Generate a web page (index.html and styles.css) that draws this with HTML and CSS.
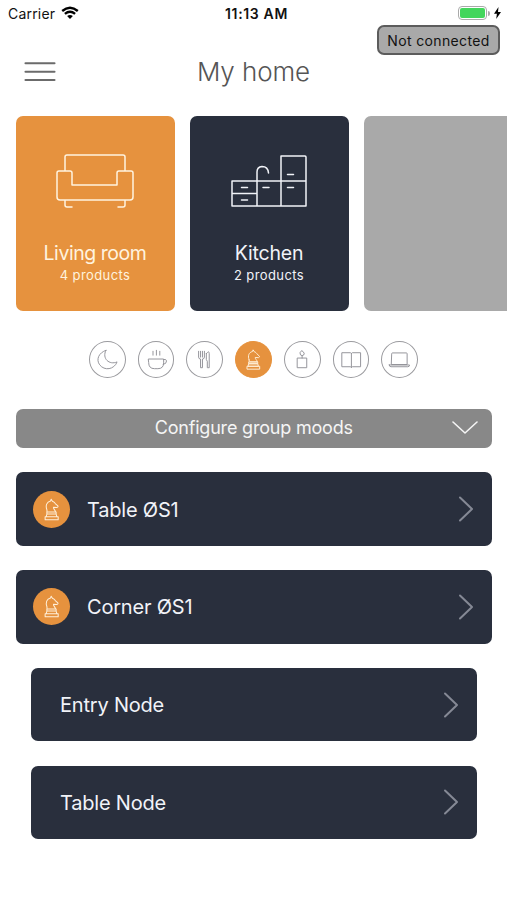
FILE: index.html
```html
<!DOCTYPE html>
<html lang="en">
<head>
<meta charset="utf-8">
<title>My home</title>
<link rel="stylesheet" href="styles.css">
</head>
<body>
<svg class="defs" width="0" height="0">
  <symbol id="knight" viewBox="0 0 36 36">
    <path d="M13.600 18.500C11.800 14 13.500 10.500 17 9.800L17.700 8l1.200 2c1.600.4 2.300 1.400 3 2.500l2.300 2c.4.8-.3 1.500-1.200 1.600l-3.100-.2c-.2 1.600 1.900 2.600 2.100 4.600h-8c-1-.4-.2-1.300-.4-2zM13.500 20.500h9v1.900h-9zM13.500 22.400h9l.7 2.600H12.800zM11.800 25h12.700v3H11.800z"/>
  </symbol>
  <symbol id="chevron" viewBox="0 0 16 28"><path d="M2 2.500l12 11.500L2 25.500"/></symbol>
</svg>
<div class="status">
  <div class="carrier"><span>Carrier</span>
    <svg class="wifi" width="18" height="14" viewBox="0 0 18 14"><path d="M1.200 5Q9-1.400 16.800 5M3.900 7.900Q9 3.700 14.100 7.900"/><path class="dot" d="M6.100 10Q9 7.800 11.900 10L9 13z"/></svg>
  </div>
  <div class="time">11:13 AM</div>
  <div class="power">
    <span class="battery"><span class="charge"></span></span><span class="tip"></span>
    <svg width="7" height="12" viewBox="0 0 7 12"><path d="M4.500 0L0 6.800h2.900L2.200 12 7 4.900H4z"/></svg>
  </div>
  <div class="notice">Not connected</div>
</div>
<header class="header">
  <button class="menu" aria-label="Menu"><svg width="32" height="22" viewBox="0 0 32 22"><path d="M1.500 2.300h29M1.500 10.700h29M1.500 19h29"/></svg></button>
  <h1>My home</h1>
</header>
<section class="rooms">
  <article class="room active">
    <svg width="78" height="56" viewBox="0 0 78 56"><path d="M9 17V3q0-2 2-2h56q2 0 2 2v14M16 31V19q0-2-2-2H3q-2 0-2 2v24q0 3 3 3h70q3 0 3-3V19q0-2-2-2H63q-2 0-2 2v12zM9 46v5q0 2 2 2h5M69 46v5q0 2-2 2h-5"/></svg>
    <h2>Living room</h2><p>4 products</p>
  </article>
  <article class="room">
    <svg width="78" height="56" viewBox="0 0 78 56"><path d="M2 27h74M2 27v25h74V3q0-1-1-1H51v50M27 52V18q0-5 5-5.500q6 0 6.500 6.500M2 39.500h25M11.500 33.500h6M11.500 46h6M33 33.500h6M57.500 33.500h6M57.500 20.500h6"/></svg>
    <h2>Kitchen</h2><p>2 products</p>
  </article>
  <article class="room empty"></article>
</section>
<nav class="moods">
  <span class="mood"><svg viewBox="0 0 36 36"><path d="M16.500 8.500C9 11 6 18 10 23.500c5 6.500 15 5 18-3C20 24 12 17 16.500 8.500z"/></svg></span>
  <span class="mood"><svg viewBox="0 0 36 36"><path d="M10 17.500h15.500v4q0 6-6 6H16q-6 0-6-6zM25.500 18h2q2 1 0 4l-2.500 1M14.500 9.500v4M18 8.500v5M21.500 9.500v4"/></svg></span>
  <span class="mood"><svg viewBox="0 0 36 36"><path d="M12 9.500v6q0 2 2 2v9h2v-9q2 0 2-2v-6M14 9.500v6M16 9.500v6M20 12v6l1 2v6.500h2V12q0-4-3 0z"/></svg></span>
  <span class="mood selected"><svg viewBox="0 0 36 36"><use href="#knight"/></svg></span>
  <span class="mood"><svg viewBox="0 0 36 36"><path d="M13 16.500h9.500v10H13zM17.700 16.500v-2.500M17.700 9l2.200 2.400q0 2.600-2.200 2.600t-2.200-2.600z"/></svg></span>
  <span class="mood"><svg viewBox="0 0 36 36"><path d="M8.500 11h8.500l1 .7 1-.7h8.500v14.500H19l-1 .7-1-.7H8.500zM18 11.700v14.500"/></svg></span>
  <span class="mood"><svg viewBox="0 0 36 36"><path d="M10 12q0-.8.8-.8h14.400q.8 0 .8.800v11.200H10zM7.500 23.700h21q0 1.800-1.800 1.800H9.300q-1.800 0-1.800-1.800z"/></svg></span>
</nav>
<div class="configure"><span>Configure group moods</span><svg width="26" height="14" viewBox="0 0 26 14"><path d="M1 1l12 11L25 1"/></svg></div>
<main class="devices">
  <div class="device"><span class="badge"><svg viewBox="0 0 36 36"><use href="#knight"/></svg></span><span class="name">Table ØS1</span><svg class="arrow"><use href="#chevron"/></svg></div>
  <div class="device"><span class="badge"><svg viewBox="0 0 36 36"><use href="#knight"/></svg></span><span class="name">Corner ØS1</span><svg class="arrow"><use href="#chevron"/></svg></div>
  <div class="device node"><span class="name">Entry Node</span><svg class="arrow"><use href="#chevron"/></svg></div>
  <div class="device node"><span class="name">Table Node</span><svg class="arrow"><use href="#chevron"/></svg></div>
</main>
</body>
</html>
```
FILE: styles.css
```css
* { box-sizing: border-box; }
body { margin: 0; width: 507px; height: 900px; overflow: hidden; background: #fff; font-family: Inter, "Liberation Sans", sans-serif; color: #111; }
h1, h2, p { margin: 0; font-weight: 400; }
svg { display: block; fill: none; stroke: currentColor; stroke-linejoin: round; stroke-linecap: round; }
.defs { position: absolute; }
.status { position: relative; display: grid; grid-template-columns: 1fr 70px 1fr; height: 28px; align-items: center; padding: 0 6px 2px 8px; }
.carrier { display: flex; align-items: center; gap: 6px; font-size: 14px; letter-spacing: .2px; }
.wifi { stroke: #000; stroke-width: 2.4; stroke-linecap: butt; }
.wifi .dot { fill: #000; stroke: none; }
.time { padding-left: 4px; font-size: 14px; font-weight: 600; letter-spacing: .65px; white-space: nowrap; text-align: center; }
.power { display: flex; align-items: center; justify-content: flex-end; }
.power svg { fill: #000; stroke: none; margin-left: 4px; }
.battery { width: 29px; height: 14px; padding: 1px; border: 1px solid #aaa; border-radius: 4px; }
.charge { display: block; height: 10px; border-radius: 2px; background: #43d65c; }
.tip { width: 2px; height: 5px; margin-left: 1px; background: #aaa; border-radius: 0 2px 2px 0; }
.notice { position: absolute; top: 25px; right: 7px; width: 123px; height: 30px; border: 2px solid #5c5c5c; border-radius: 7px; background: #a9a9a9; text-align: center; font-size: 14px; line-height: 27px; letter-spacing: .35px; }
.header { height: 88px; display: grid; grid-template-columns: 80px 1fr 80px; align-items: start; }
.header h1 { margin-top: 28px; text-align: center; font-size: 26px; line-height: 32px; color: #555; font-weight: 350; letter-spacing: -.1px; }
.menu { margin: 33px 0 0 24px; padding: 0; width: 32px; border: 0; background: none; color: #6b6b6b; }
.menu svg { stroke-width: 2.1; }
.rooms { display: flex; gap: 15px; padding-left: 15.500px; height: 195px; overflow: hidden; }
.room { flex: 0 0 159px; display: flex; flex-direction: column; align-items: center; padding-top: 38px; border-radius: 7px; background: #292f3d; color: #f1f3f8; }
.room.active { background: #e6923e; color: #fff3df; }
.room.empty { background: #a9a9a9; }
.room svg { stroke-width: 1.5; }
.room h2 { margin-top: 30px; font-size: 19.500px; line-height: 26px; letter-spacing: -.45px; }
.room:not(.active) h2 { letter-spacing: -.2px; }
.room p { font-size: 13px; line-height: 19px; letter-spacing: .4px; }
.moods { display: flex; justify-content: center; gap: 12px; margin: 30px 0 0; height: 38px; }
.mood { width: 36.800px; height: 37px; border: 1.200px solid #9b9b9f; border-radius: 50%; color: #929298; }
.mood svg { width: 100%; height: 100%; stroke-width: 1; }
.mood.selected { border-color: #e6923e; background: #e6923e; color: #fff0da; }
.configure { display: grid; grid-template-columns: 40px 1fr 40px; align-items: center; height: 39px; margin: 30px 15px 0 15.500px; padding-bottom: 2px; border-radius: 7px; background: #888; color: #f5f5f5; font-size: 18px; letter-spacing: -.2px; text-align: center; }
.configure span { grid-column: 2; }
.configure svg { stroke-width: 1.6; }
.devices { display: flex; flex-direction: column; gap: 24.300px; padding: 24.300px 15px 0 15.500px; }
.device { display: flex; align-items: center; height: 73.500px; padding: 0 18.500px 0 17px; border-radius: 7px; background: #292f3d; color: #f1f3f8; font-size: 20px; letter-spacing: -.2px; }
.device .name { position: relative; top: .5px; }
.device.node { margin: 0 15px; padding-left: 29.500px; }
.badge { width: 37px; height: 37px; margin-right: 17.500px; border-radius: 50%; background: #e6923e; color: #fff0da; }
.badge svg { width: 37px; height: 37px; stroke-width: 1; }
.arrow { width: 16px; height: 28px; margin-left: auto; color: #858995; stroke-width: 2; }
```
